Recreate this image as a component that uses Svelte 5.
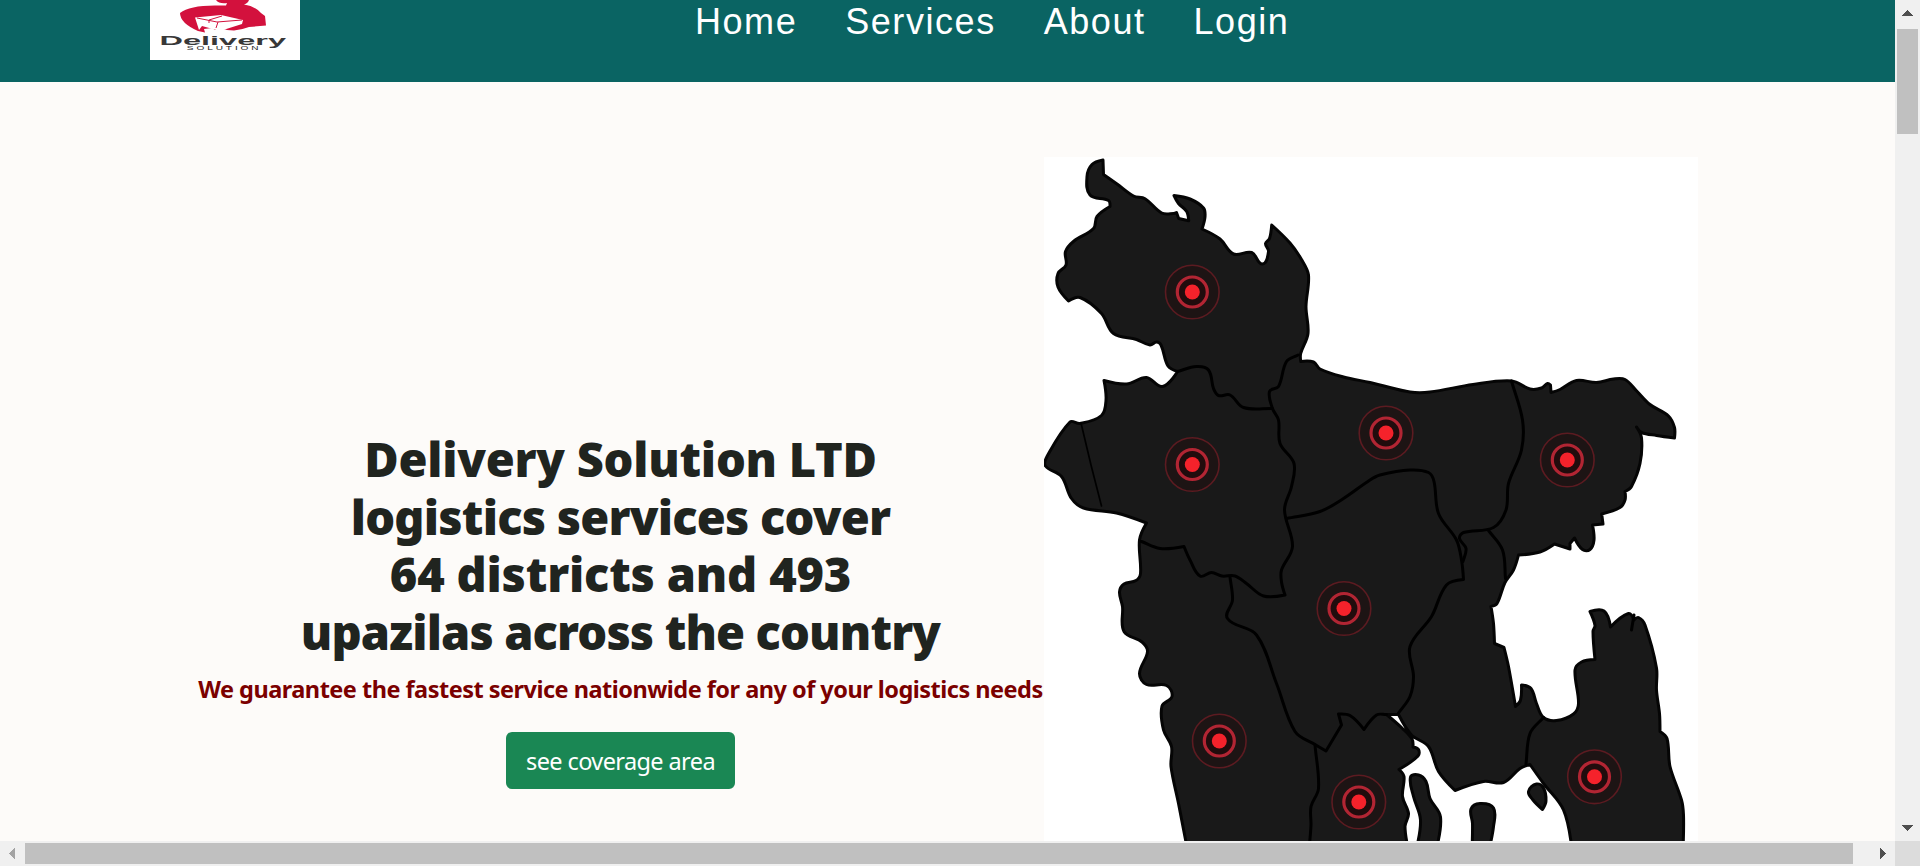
<script>
  const links = ['Home', 'Services', 'About', 'Login'];
  const headline = [
    { text: 'Delivery Solution LTD', tracking: -0.24 },
    { text: 'logistics services cover', tracking: -0.78 },
    { text: '64 districts and 493', tracking: -0.2 },
    { text: 'upazilas across the country', tracking: -0.86 }
  ];

  // Points are "x,y"; a trailing "!" keeps the point a sharp corner.
  function curve(src, closed = false) {
    const pts = src.trim().split(/\s+/).map((t) => {
      const sharp = t.endsWith('!');
      const [x, y] = t.replace('!', '').split(',').map(Number);
      return { x, y, sharp };
    });
    const n = pts.length;
    const at = (i) => (closed ? pts[(i + n) % n] : pts[Math.max(0, Math.min(n - 1, i))]);
    const handle = (i, dir) => {
      const p = at(i);
      if (p.sharp) return [p.x, p.y];
      const a = at(i - 1);
      const b = at(i + 1);
      const here = dir > 0 ? b : a;
      const span = Math.hypot(here.x - p.x, here.y - p.y);
      const len = Math.hypot(b.x - a.x, b.y - a.y) || 1;
      const k = (dir * span * 0.34) / len;
      return [p.x + (b.x - a.x) * k, p.y + (b.y - a.y) * k];
    };
    let d = `M${pts[0].x} ${pts[0].y}`;
    for (let i = 0; i < (closed ? n : n - 1); i++) {
      const c1 = handle(i, 1);
      const c2 = handle(i + 1, -1);
      const e = at(i + 1);
      d += `C${c1[0].toFixed(1)} ${c1[1].toFixed(1)} ${c2[0].toFixed(1)} ${c2[1].toFixed(1)} ${e.x} ${e.y}`;
    }
    return closed ? d + 'Z' : d;
  }

  const land = curve(`
    1103,160! 1103.5,174.5! 1117,184 1133.5,196 1145,198.7 1161.7,213 1173.5,213.5 1176.5,212.5! 1178.7,218.5! 1188.7,220.7!
    1186.7,211.5 1178.5,203.5 1174,195.5! 1190,199 1203.5,208 1205,217 1202,229! 1220,239 1233.5,254 1251.7,252.5
    1262.5,264 1268.5,251.5 1265.5,243.5 1269.5,238.5 1271.7,225! 1290,243 1301.5,259.5 1308.5,275 1306,306.5 1308,333.5
    1300.7,353.5 1300.7,361.5! 1313.5,362 1320,369 1343.5,377 1370,382.5 1380,385 1410,392 1430,392 1473,384.5
    1511.7,381 1530,389 1541.5,388 1547.5,383.5 1550.5,385! 1551,392.5! 1560,389.5 1576.5,380.5 1596.5,382.5 1613.5,379
    1625,379.5 1636.7,391 1650,404.5 1668.5,416 1674.5,427.5 1674.5,438! 1656.5,435.5 1641.5,432.5 1636.5,427! 1641.5,438
    1640,463.5 1631.5,486.5 1625,491.5! 1625,500 1620,507.5 1601.7,514! 1603,524! 1592.5,525! 1594,540 1590,549.5
    1582.5,549.5 1574.5,538! 1570,543.5! 1570,549! 1554.5,544! 1540,552 1518.5,555! 1513.5,570 1505,582.5 1497,603.5
    1491,606.5! 1493.5,623.5 1494.5,643.5! 1504,647.5! 1508.5,666.5 1515.5,706.5! 1520.5,700 1521.5,685! 1531,688.5
    1536.5,703.5 1543.5,717.5 1556.5,720.5 1573.5,714 1578.5,703.5 1575,670 1581.5,662 1595,659.5! 1593,631.5 1595,625.5
    1590,611.5! 1604,611 1610.5,627! 1628.5,613.5 1634,620! 1638.5,617.5 1645,625 1656.5,668 1656.5,690 1659.5,713.5
    1660,731.5! 1667,738.5 1670,766.5 1681.5,800 1683.5,815 1683,850! 1572,850! 1563.5,810 1543.5,783.5 1530,764.5! 1520,768.5
    1503.5,782.5 1483.5,781.5 1455,790.5! 1438.5,771.5 1428.5,746.5 1411.5,735 1398.5,714.5! 1386.5,714.5! 1402,728 1412,739
    1413,747! 1418.5,749.5 1418,756 1399,769.5! 1404,776.5 1402.5,796.5 1408.5,813.5 1405,826.5 1408.5,850! 1187.5,850!
    1178.5,803.5 1171,766.5 1171.5,746.5 1163.5,730 1162,706 1172,696.5 1166.5,685.5 1146.5,684.5 1139.5,673.5
    1147.5,651.5 1142,642 1124,631.5 1122.5,606.5 1119.5,592 1124,584 1136,580.5 1140.5,573.5 1139.5,540 1146.5,523!
    1116.5,513 1083.5,508 1071.5,498.5 1061.5,476.5 1045.5,466 1047,456.5 1070,422 1080,423.5 1101.5,415.5 1106,400
    1104,380.5! 1126.5,384 1146.5,377.5 1162.5,386.5 1177.5,371.5! 1168,366 1161,345 1156.5,342 1150,345 1136.5,339.5
    1113.5,333.5 1101.5,313.5 1080,297.5 1068.5,301! 1058,287 1058,273.5 1066,265 1065.5,251.5 1074,241 1093.5,228.5
    1097,216.5 1110,206.5! 1108.5,200.5 1090,195 1087,176.5 1092,164.5
  `, true);

  const islands = [
    '1410.5,777 1418.5,775 1426,781.5 1430,798.5 1440.5,817 1436,850! 1416,850! 1420.5,820 1413.5,796.5',
    '1471,809 1480,803.5 1493.5,808 1493.5,826.5 1489,850! 1472,850! 1472.5,823.5',
    '1528.5,791.5 1536.5,784 1543.5,788 1546,801 1542.5,809.5! 1533,800'
  ].map((p) => curve(p, true));

  const borders = [
    '1177.5,371.5 1196.5,366.5 1208.5,370 1213.5,388.5 1218.5,395.5 1230,395 1243.5,407.5 1272.5,408.5',
    '1298,355 1286.5,361.5 1278.5,386.5 1269.5,391.5 1272.5,408.5 1278.5,420 1280,443.5 1294,463.5 1291.5,486.5 1284.5,510 1292.5,546.5 1281.5,570 1281.5,582 1285,595! 1263.5,596 1246.5,583.5 1235,576 1222,576 1211.5,572.5 1200,576 1190,560 1184,546.5! 1160,548.5 1141.5,541.5',
    '1286.5,518.5 1320,511.5 1343.5,498.5 1370,480 1380,475 1410,470 1428.5,472.5 1434,481.5 1438.5,513.5 1456.5,540 1461.5,560 1463.5,579.5! 1446.5,585 1431.5,616.5 1410,646.5 1413.5,676.5 1410,696.5 1398.5,713',
    '1511.5,381 1522.5,420 1521.5,450 1508.5,483.5 1506,510 1493.5,527.5 1463.5,532.5 1459.5,538.5 1466,548.5 1463,561.5',
    '1488.5,530.5 1502.5,550 1505.5,578.5',
    '1543.5,717.5 1530,733.5 1526,764',
    '1230,577 1232.5,600 1227.5,618.5 1256.5,635 1276.5,683.5 1295,731.5 1315,744.5 1326,751! 1341.5,725! 1338.5,714! 1350,715.5 1364,729.5! 1376.5,715 1386.5,714.5',
    '1315,745 1318.5,788.5 1311,806.5 1311,825 1309.5,845',
    '1634,615 1631.5,630'
  ].map((p) => curve(p));

  const hubs = [
    [1192.3, 292], [1192.3, 464.5], [1386, 433], [1567.3, 460],
    [1344, 608.5], [1219.3, 741], [1358.8, 802], [1594.5, 776.8]
  ];
</script>

<div class="window">
  <div class="page">
    <header>
      <svg class="logo" viewBox="0 0 150 60" role="img" aria-label="Delivery Solution">
        <rect width="150" height="60" fill="#fff" />
        <path fill="#d3113d" d="M66 0H99Q98 3 94 4.500Q105 6 111 13L115 16L116 25.500L99 27Q91 30 84 30.500L77 30Q73 28 65 30L62 28L54 29L55 32.500L48 31Q30 23 30 13Q40 5 68 5.500L76 5.500L77 3Q69 4 66 0Z" />
        <path fill="#fff" d="M45 17.500L71 15L93 20L92 24L70 31L52 26L49 30Z" />
        <path fill="none" stroke="#d3113d" d="M47 18L67 22L92 20M68 22L66 28M72 16L59 20V23" />
        <text class="brand" transform="translate(9.500 44.500) scale(1.480 1)" textLength="85.500" lengthAdjust="spacingAndGlyphs">Delivery</text>
        <text class="tag" transform="translate(36.800 49.700) scale(2.100 1)" textLength="34.200" lengthAdjust="spacing">SOLUTION</text>
      </svg>
      <nav>
        {#each links as link}<a href="#top">{link}</a>{/each}
      </nav>
    </header>

    <main>
      <section class="copy">
        <h1>{#each headline as line}<span style="letter-spacing: {line.tracking}px">{line.text}</span>{/each}</h1>
        <p>We guarantee the fastest service nationwide for any of your logistics needs</p>
        <button type="button">see coverage area</button>
      </section>
      <svg class="map" viewBox="1044 157 654 684" role="img" aria-label="Coverage map">
        <rect x="1044" y="157" width="654" height="684" fill="#fff" />
        <g class="land">
          <path d={land} />
          {#each islands as d}<path {d} />{/each}
        </g>
        <g class="border">
          {#each borders as d}<path {d} />{/each}
          <path class="thin" d="M1081 423L1091 465L1101.500 506" />
        </g>
        {#each hubs as [x, y]}
          <g class="hub" transform="translate({x} {y})">
            <circle class="glow" r="26.800" />
            <circle class="ring" r="15" />
            <circle class="dot" r="7.500" />
          </g>
        {/each}
      </svg>
    </main>
  </div>

  <div class="bar vertical">
    <svg viewBox="0 0 25 29"><path d="M7 16L12.500 10L18 16Z" /></svg>
    <i></i>
    <svg class="end" viewBox="0 0 25 29"><path d="M7 13L12.500 19L18 13Z" /></svg>
  </div>
  <div class="bar horizontal">
    <svg viewBox="0 0 25 25"><path class="dim" d="M15 7L9 12.500L15 18Z" /></svg>
    <i></i>
    <svg class="end" viewBox="0 0 25 25"><path d="M10 7L16 12.500L10 18Z" /></svg>
  </div>
  <div class="corner"></div>
</div>

<style>
  :global(body) { margin: 0; overflow: hidden; }
  .window {
    display: grid;
    grid-template: minmax(0, 1fr) 25px / minmax(0, 1fr) 25px;
    width: 100vw;
    height: 100vh;
    overflow: hidden;
  }
  .page {
    display: flex;
    flex-direction: column;
    overflow: hidden;
    background: #fdfbf9;
  }
  header {
    display: flex;
    flex: none;
    align-items: flex-start;
    height: 82px;
    padding-left: 150px;
    background: #0a6463;
  }
  .logo { display: block; width: 150px; height: 60px; }
  .brand { font: bold 12.2px "Liberation Sans", Arial, sans-serif; fill: #383838; }
  .tag { font: 4.8px "Liberation Sans", Arial, sans-serif; fill: #222; }
  nav { display: flex; gap: 48px; margin-left: 395px; }
  nav a {
    color: #fff;
    font: 36px/43px "Liberation Sans", Arial, sans-serif;
    letter-spacing: 1.55px;
    text-decoration: none;
  }
  main { display: flex; flex: 1; min-height: 0; padding: 75px 197px 0; overflow: hidden; }
  .copy {
    display: flex;
    flex: none;
    flex-direction: column;
    align-items: center;
    width: 847px;
    padding-top: 274px;
    box-sizing: border-box;
    font-family: "Noto Sans", "Open Sans", sans-serif;
  }
  h1 {
    margin: 0;
    color: #20241f;
    font-size: 47px;
    font-weight: 900;
    line-height: 57.6px;
    text-align: center;
  }
  h1 span { display: block; white-space: nowrap; }
  p {
    margin: 10px 0 0;
    color: #7b0000;
    font-size: 23.5px;
    font-weight: 700;
    letter-spacing: -0.51px;
    line-height: 36px;
    white-space: nowrap;
  }
  button {
    width: 229px;
    height: 57px;
    margin-top: 24.6px;
    padding: 1px 0 0;
    border: 0;
    border-radius: 6px;
    background: #1a8754;
    color: #fff;
    font: 23.5px/36px "Noto Sans", "Open Sans", sans-serif;
    letter-spacing: -0.6px;
    white-space: nowrap;
  }
  .map { display: block; flex: none; width: 654px; height: 684px; }
  .land path { fill: #191919; stroke: #050505; stroke-width: 3; stroke-linejoin: round; }
  .border path { fill: none; stroke: #000; stroke-width: 3; stroke-linejoin: round; stroke-linecap: round; }
  .border .thin { stroke-width: 1.7; }
  .glow { fill: #1d1414; stroke: #5c1b21; stroke-width: 1.6; }
  .ring { fill: #210c0d; stroke: #b22533; stroke-width: 3.2; }
  .dot { fill: #f5222b; }
  .bar { display: flex; background: #f0f0f0; }
  .bar svg { display: block; flex: none; fill: #4f4f4f; shape-rendering: crispEdges; }
  .bar .dim { fill: #a3a3a3; }
  .bar i { flex: none; background: #c0c0c0; }
  .vertical { flex-direction: column; align-items: center; }
  .vertical svg { width: 25px; height: 29px; }
  .vertical i { width: 21px; height: 105px; }
  .horizontal { align-items: center; }
  .horizontal svg { width: 25px; height: 25px; }
  .horizontal i { width: 1828px; height: 21px; }
  .vertical .end { margin-top: auto; }
  .horizontal .end { margin-left: auto; }
  .corner { background: #dcdcdc; }
</style>
